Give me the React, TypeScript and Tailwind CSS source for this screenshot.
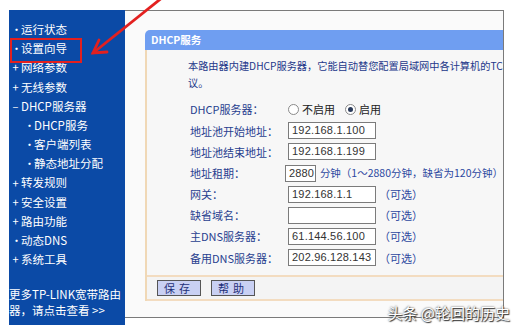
import React from 'react';

const FONT = { fontFamily: '"Noto Sans CJK SC", "Liberation Sans", sans-serif' };

type MenuItem = { mark: '•' | '+' | '-'; label: string; sub?: boolean };

const MENU: MenuItem[] = [
  { mark: '•', label: '运行状态' },
  { mark: '•', label: '设置向导' },
  { mark: '+', label: '网络参数' },
  { mark: '+', label: '无线参数' },
  { mark: '-', label: 'DHCP服务器' },
  { mark: '•', label: 'DHCP服务', sub: true },
  { mark: '•', label: '客户端列表', sub: true },
  { mark: '•', label: '静态地址分配', sub: true },
  { mark: '+', label: '转发规则' },
  { mark: '+', label: '安全设置' },
  { mark: '+', label: '路由功能' },
  { mark: '•', label: '动态DNS' },
  { mark: '+', label: '系统工具' },
];

// 输入框
const Field: React.FC<{ value?: string; w?: string }> = ({ value = '', w = 'w-[88px]' }) => (
  <div
    className={`${w} h-[17px] bg-white border border-[#7b7b7b] flex items-center px-[3px] text-[11px] text-[#333] leading-none whitespace-nowrap overflow-hidden tracking-[0.2px]`}
    style={{ fontFamily: '"Liberation Sans", sans-serif' }}
  >
    {value}
  </div>
);

const Optional = () => <span className="ml-[3px] text-[#2c47a0] text-[11px]">（可选）</span>;

const Row: React.FC<{ label: string; children: React.ReactNode }> = ({ label, children }) => (
  <div className="flex items-center h-[21.2px]">
    <div className="w-[98px] text-[11px] text-[#27408f] whitespace-nowrap">{label}</div>
    <div className="flex items-center">{children}</div>
  </div>
);

const Radio: React.FC<{ checked?: boolean }> = ({ checked }) => (
  <span className="w-[11px] h-[11px] rounded-full border border-[#8a8a8a] bg-white flex items-center justify-center">
    {checked && <span className="w-[5px] h-[5px] rounded-full bg-[#2a3a5a]" />}
  </span>
);

const App: React.FC = () => {
  return (
    <div className="w-[513px] h-[325px] bg-white relative overflow-hidden" style={FONT}>
      <div className="flex pt-[10px] pl-[9px] h-full">
        {/* 左侧菜单 */}
        <aside className="w-[116px] h-full bg-[#0b4aa6] pt-[10px] text-white text-[11.5px] overflow-hidden">
          {MENU.map((m) => (
            <div
              key={m.label}
              className={`flex items-center h-[19.2px] whitespace-nowrap ${m.sub ? 'pl-[15px]' : 'pl-[2px]'}`}
            >
              <span className="w-[9px] text-center text-[11px] leading-none">{m.mark === '-' ? '–' : m.mark}</span>
              <span className="ml-[1px]">{m.label}</span>
            </div>
          ))}
          <div className="mt-[17px] leading-[16px] text-[11.5px] whitespace-nowrap">
            <div>更多TP-LINK宽带路由</div>
            <div>器，请点击查看 &gt;&gt;</div>
          </div>
        </aside>

        {/* 主区域 */}
        <main className="w-[379px] h-[308px] border-t border-r border-b border-[#7a7a7a] bg-[#fafafa] pl-[20px] pt-[19px]">
          <section className="w-[358px] h-[271px] flex flex-col">
            <div className="h-[20px] bg-[#6f9ef1] rounded-tl-[5px] flex items-center pl-[6px] text-white text-[10.5px] font-bold">
              DHCP服务
            </div>
            <div className="flex-1 border-l-2 border-[#f0d8b6] bg-[#f7f7f7] flex flex-col">
              <div className="pl-[41px] pt-[7px] text-[10.2px] text-[#24388a] leading-[17px]">
                <div className="whitespace-nowrap">本路由器内建DHCP服务器，它能自动替您配置局域网中各计算机的TC</div>
                <div>议。</div>
              </div>
              <div className="pl-[43px] pt-[8px]">
                <Row label="DHCP服务器：">
                  <Radio />
                  <span className="ml-[3px] text-[11px] text-[#222]">不启用</span>
                  <span className="ml-[10px]" />
                  <Radio checked />
                  <span className="ml-[3px] text-[11px] text-[#222]">启用</span>
                </Row>
                <Row label="地址池开始地址：">
                  <Field value="192.168.1.100" />
                </Row>
                <Row label="地址池结束地址：">
                  <Field value="192.168.1.199" />
                </Row>
                <Row label="地址租期：">
                  <Field value="2880" w="w-[31px]" />
                  <span className="ml-[4px] text-[10.5px] text-[#2c47a0] whitespace-nowrap">分钟（1～2880分钟，缺省为120分钟）</span>
                </Row>
                <Row label="网关：">
                  <Field value="192.168.1.1" />
                  <Optional />
                </Row>
                <Row label="缺省域名：">
                  <Field />
                  <Optional />
                </Row>
                <Row label="主DNS服务器：">
                  <Field value="61.144.56.100" />
                  <Optional />
                </Row>
                <Row label="备用DNS服务器：">
                  <Field value="202.96.128.143" />
                  <Optional />
                </Row>
              </div>
              <div className="mt-auto h-[26px] border-t-2 border-b-2 border-[#f3dcc0] bg-[#f4f4f4] flex items-center gap-[10px] pl-[10px]">
                <button className="h-[16px] px-[6px] bg-[#c9d0f3] border border-[#555] text-[11px] text-[#1e2f78] leading-none tracking-[4px]">
                  保存
                </button>
                <button className="h-[16px] px-[6px] bg-[#c9d0f3] border border-[#555] text-[11px] text-[#1e2f78] leading-none tracking-[4px]">
                  帮助
                </button>
              </div>
            </div>
          </section>
        </main>
      </div>

      {/* 红框标注 */}
      <div className="absolute left-[10px] top-[38px] w-[72px] h-[25px] border-2 border-[#e3201f]" />

      {/* 红色箭头 */}
      <svg className="absolute left-0 top-0" width="513" height="325" viewBox="0 0 513 325">
        <g stroke="#e3201f" strokeWidth="2.8" fill="none" strokeLinecap="round">
          <line x1="163" y1="-3" x2="93" y2="53" />
          <polyline points="99,40 93,53 107,52" />
        </g>
      </svg>

      {/* 水印 */}
      <div
        className="absolute right-[3px] top-[302px] text-[15px] text-white whitespace-nowrap"
        style={{ textShadow: '0 0 2px #333, 1px 1px 1px #333' }}
      >
        头条 @轮回的历史
      </div>
    </div>
  );
};

export default App;
